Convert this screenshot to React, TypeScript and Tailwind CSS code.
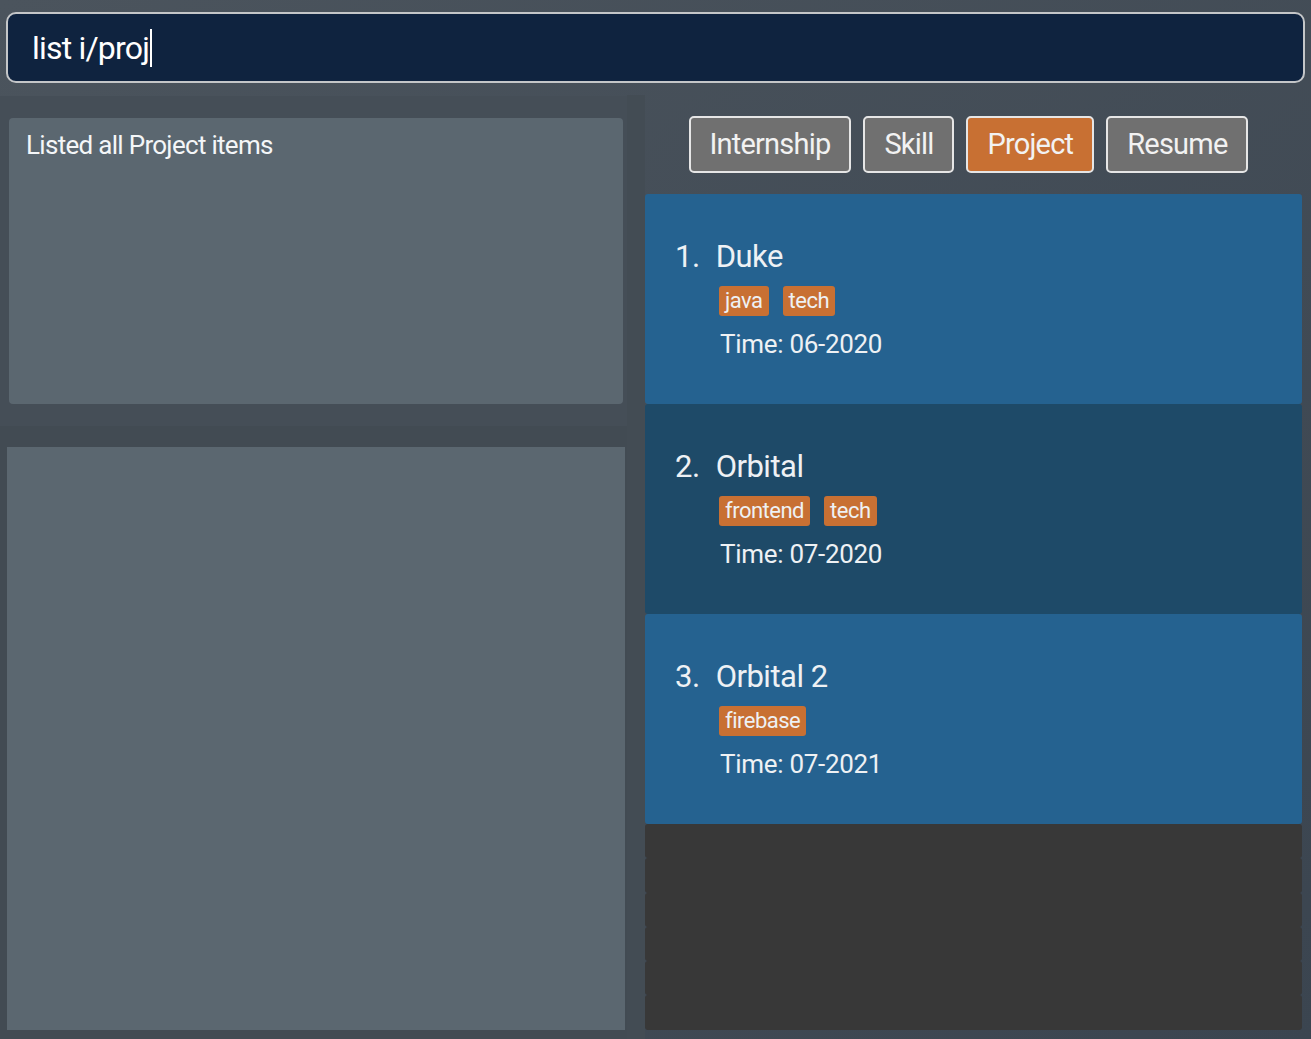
import React from 'react';

type Project = {
  title: string;
  tags: string[];
  time: string;
};

const PROJECTS: Project[] = [
  { title: 'Duke', tags: ['java', 'tech'], time: '06-2020' },
  { title: 'Orbital', tags: ['frontend', 'tech'], time: '07-2020' },
  { title: 'Orbital 2', tags: ['firebase'], time: '07-2021' },
];

const TABS = ['Internship', 'Skill', 'Project', 'Resume'];

const ProjectCard: React.FC<{ project: Project; index: number }> = ({ project, index }) => (
  <div
    className={`h-[210px] rounded-[3px] pl-[30px] pt-[43px] text-[#eef1f4] ${
      index % 2 === 0 ? 'bg-[#256290]' : 'bg-[#1e4a68]'
    }`}
  >
    <div className="flex items-baseline gap-[16px] text-[31px] leading-[40px] tracking-[-0.5px]">
      <span>{index + 1}.</span>
      <span>{project.title}</span>
    </div>
    <div className="ml-[44px] mt-[9px] flex gap-[14px]">
      {project.tags.map((tag) => (
        <span key={tag} className="h-[30px] rounded-[3px] bg-[#c87033] px-[6px] text-[22px] leading-[30px] tracking-[-0.5px]">
          {tag}
        </span>
      ))}
    </div>
    <div className="ml-[45px] mt-[10px] text-[26px] leading-[36px] tracking-[-0.3px]">Time: {project.time}</div>
  </div>
);

export default function App() {
  return (
    <div
      className="flex h-[1039px] w-[1311px] flex-col overflow-hidden bg-gradient-to-br from-[#4b545d] to-[#3b4550] text-white"
      style={{ fontFamily: 'Roboto, "Liberation Sans", sans-serif' }}
    >
      {/* Command box */}
      <div className="px-[6px] pt-[12px] pb-[12px]">
        <div className="flex h-[71px] items-center rounded-[10px] border-2 border-[#c4c6c8] bg-[#0f233f] pl-[24px]">
          <span className="text-[32px] tracking-[-0.8px]">list i/proj</span>
          <span className="ml-[1px] h-[38px] w-[2px] bg-white" />
        </div>
      </div>

      <div className="flex min-h-0 flex-1">
        {/* Left column */}
        <div className="flex w-[627px] flex-col">
          <div className="mt-[1px] h-[330px] bg-[#454e57] pl-[9px] pr-[4px] pt-[22px]">
            <div className="h-[286px] rounded-[4px] bg-[#5b6770] px-[17px] pt-[8px]">
              <span className="text-[26px] tracking-[-0.7px] text-[#f4f6f8]">Listed all Project items</span>
            </div>
          </div>
          <div className="h-[21px] bg-[#424b53]" />
          <div className="flex flex-1 flex-col bg-[#424b53] pl-[7px] pr-[2px] pb-[9px]">
            <div className="flex-1 bg-[#5b6770]" />
          </div>
        </div>

        {/* Divider */}
        <div className="w-[18px] bg-[#434c54]" />

        {/* Right column */}
        <div className="flex flex-1 flex-col pr-[9px] pb-[9px]">
          <div className="flex h-[99px] items-center justify-center gap-[12px] pr-[10px]">
            {TABS.map((tab) => (
              <button
                key={tab}
                className={`h-[57px] rounded-[5px] border-2 border-[#e6e6e6] px-[19px] text-[29px] tracking-[-0.8px] text-[#f2f2f2] ${
                  tab === 'Project' ? 'bg-[#c87033]' : 'bg-[#707070]'
                }`}
              >
                {tab}
              </button>
            ))}
          </div>
          <div className="flex flex-1 flex-col">
            {PROJECTS.map((p, i) => (
              <ProjectCard key={p.title} project={p} index={i} />
            ))}
            <div className="flex flex-1 flex-col overflow-hidden">
              {Array.from({ length: 6 }).map((_, i) => (
                <div key={i} className="h-[34.3px] shrink-0 rounded-[3px] bg-[#383838]" />
              ))}
            </div>
          </div>
        </div>
      </div>
    </div>
  );
}
